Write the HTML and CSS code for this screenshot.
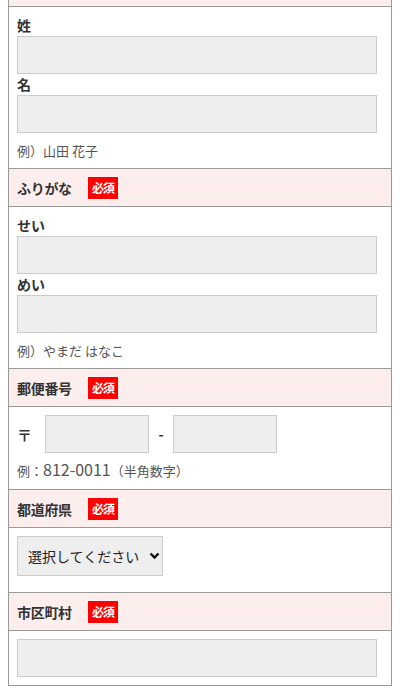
FILE: index.html
```html
<!DOCTYPE html>
<html lang="ja">
<head>
<meta charset="utf-8">
<link rel="stylesheet" href="styles.css">
</head>
<body>
<div class="form">
  <div class="topstrip"></div>
  <div class="body">
    <div class="lbl">姓</div>
    <div class="inp full"></div>
    <div class="lbl">名</div>
    <div class="inp full"></div>
    <div class="ex">例）山田 花子</div>
  </div>
  <div class="head"><span class="ttl">ふりがな</span><span class="req">必須</span></div>
  <div class="body">
    <div class="lbl">せい</div>
    <div class="inp full"></div>
    <div class="lbl">めい</div>
    <div class="inp full"></div>
    <div class="ex">例）やまだ はなこ</div>
  </div>
  <div class="head"><span class="ttl">郵便番号</span><span class="req">必須</span></div>
  <div class="body zip">
    <div class="ziprow">
      <span class="mark">〒</span>
      <div class="inp short"></div>
      <span class="dash">-</span>
      <div class="inp short"></div>
    </div>
    <div class="ex ex2">例：<span class="num">812-0011</span>（半角数字）</div>
  </div>
  <div class="head"><span class="ttl">都道府県</span><span class="req">必須</span></div>
  <div class="body pref">
    <div class="sel"><span>選択してください</span><svg width="11" height="8" viewBox="0 0 11 8"><path d="M1.5 1.5 L5.5 5.5 L9.5 1.5" fill="none" stroke="#111" stroke-width="2.4"/></svg></div>
  </div>
  <div class="head"><span class="ttl">市区町村</span><span class="req">必須</span></div>
  <div class="body city">
    <div class="inp full"></div>
  </div>
</div>
</body>
</html>
```
FILE: styles.css
```css
html, body { margin: 0; padding: 0; background: #fff; }
body { padding: 0 8px; font-family: "Noto Sans CJK JP", "Noto Sans", sans-serif; color: #333; }
.form { border-left: 1px solid #999; border-right: 1px solid #999; width: 382px; }
.topstrip { height: 6px; background: #fdeeee; border-bottom: 1px solid #999; }
.head { height: 37px; background: #fdeeee; border-bottom: 1px solid #999; display: flex; align-items: center; padding: 0 8px; }
.body { border-bottom: 1px solid #999; padding: 8px 8px 8px; }
.ttl { font-size: 14px; font-weight: bold; width: 56px; line-height: 20px; letter-spacing: -0.3px; }
.req { margin-left: 15px; width: 30px; height: 22px; background: #f00; color: #fff; font-size: 12px; font-weight: bold; display: flex; align-items: center; justify-content: center; letter-spacing: -1px; }
.lbl { font-size: 14px; font-weight: bold; line-height: 21px; height: 21px; }
.inp { background: #eee; border: 1px solid #ccc; height: 36px; box-sizing: content-box; }
.full { width: 358px; }
.short { width: 102px; }
.ex { margin-top: 8px; font-size: 13px; line-height: 19px; color: #555; }
.zip { padding-top: 8px; padding-bottom: 9px; }
.ziprow { display: flex; align-items: center; }
.mark { font-size: 15px; font-weight: bold; width: 28px; color: #333; }
.dash { width: 24px; text-align: center; font-size: 14px; font-weight: bold; }
.ex2 { margin-top: 7px; }
.num { font-size: 16px; }
.pref { padding-top: 8px; padding-bottom: 16px; }
.sel { width: 134px; height: 38px; background: #eee; border: 1px solid #ccc; display: flex; align-items: center; padding-left: 10px; box-sizing: content-box; font-size: 14px; color: #222; gap: 10px; }
.city { padding-top: 8px; }
```
